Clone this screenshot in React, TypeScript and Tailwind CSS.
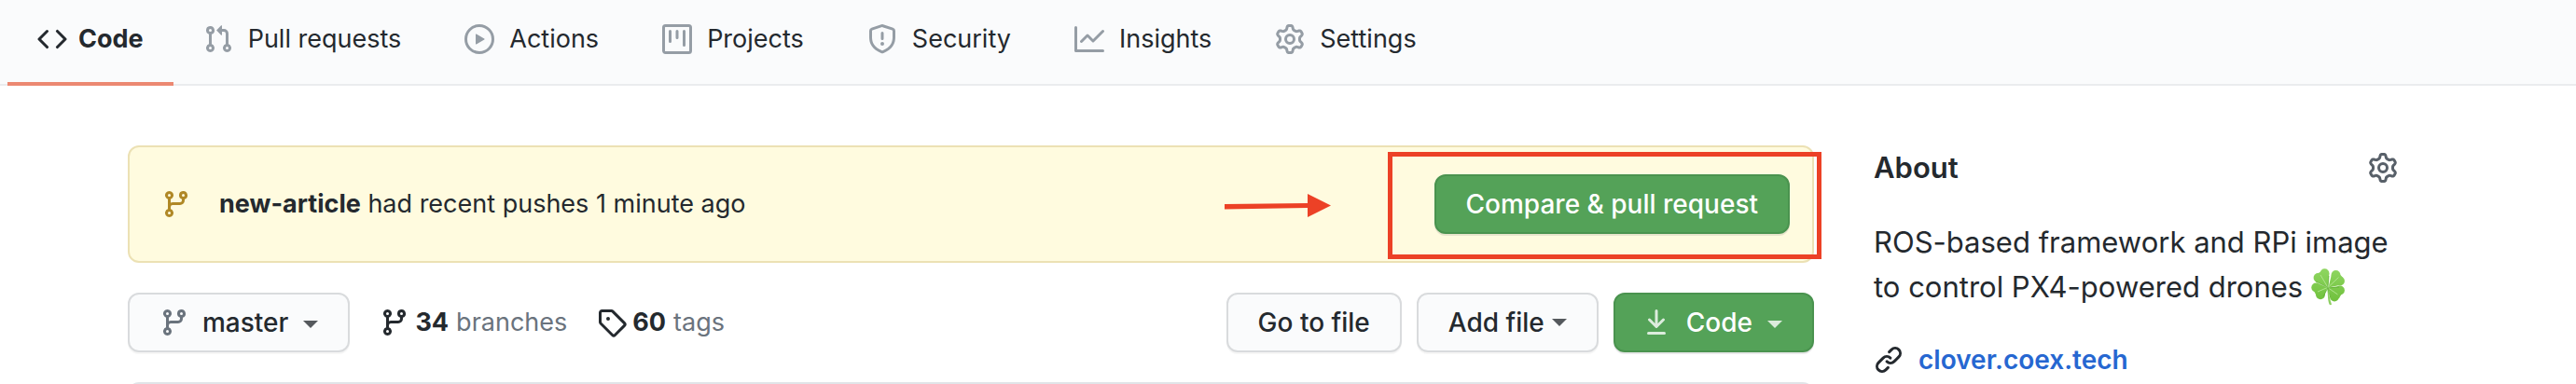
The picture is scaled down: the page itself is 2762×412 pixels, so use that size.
import type { ReactNode } from "react";

const paths = {
  code: "M4.72 3.22a.75.75 0 011.06 1.06L2.06 8l3.72 3.72a.75.75 0 11-1.06 1.06L.47 8.53a.75.75 0 010-1.06l4.25-4.25zm6.56 0a.75.75 0 10-1.06 1.06L13.94 8l-3.72 3.72a.75.75 0 101.06 1.06l4.25-4.25a.75.75 0 000-1.06l-4.25-4.25z",
  pull: "M7.177 3.073L9.573.677A.25.25 0 0110 .854v4.792a.25.25 0 01-.427.177L7.177 3.427a.25.25 0 010-.354zM3.75 2.5a.75.75 0 100 1.5.75.75 0 000-1.5zm-2.25.75a2.25 2.25 0 113 2.122v5.256a2.251 2.251 0 11-1.5 0V5.372A2.25 2.25 0 011.5 3.25zM11 2.5h-1V4h1a1 1 0 011 1v5.628a2.251 2.251 0 101.5 0V5A2.5 2.5 0 0011 2.5zm1 10.25a.75.75 0 111.5 0 .75.75 0 01-1.5 0zM3.75 12a.75.75 0 100 1.5.75.75 0 000-1.5z",
  play: "M1.5 8a6.5 6.5 0 1113 0 6.5 6.5 0 01-13 0zM8 0a8 8 0 100 16A8 8 0 008 0zM6.379 5.227A.25.25 0 006 5.442v5.117a.25.25 0 00.379.214l4.264-2.559a.25.25 0 000-.428L6.379 5.227z",
  project: "M1.75 0A1.75 1.75 0 000 1.75v12.5C0 15.216.784 16 1.75 16h12.5A1.75 1.75 0 0016 14.25V1.75A1.75 1.75 0 0014.25 0H1.75zM1.5 1.75a.25.25 0 01.25-.25h12.5a.25.25 0 01.25.25v12.5a.25.25 0 01-.25.25H1.75a.25.25 0 01-.25-.25V1.75zM11.75 3a.75.75 0 00-.75.75v7.5a.75.75 0 001.5 0v-7.5a.75.75 0 00-.75-.75zm-8.25.75a.75.75 0 011.5 0v5.5a.75.75 0 01-1.5 0v-5.5zM8 3a.75.75 0 00-.75.75v3.5a.75.75 0 001.5 0v-3.5A.75.75 0 008 3z",
  shield: "M7.467.133a1.75 1.75 0 011.066 0l5.25 1.68A1.75 1.75 0 0115 3.48V7c0 1.566-.32 3.182-1.303 4.682-.983 1.498-2.585 2.813-5.032 3.855a1.7 1.7 0 01-1.33 0c-2.447-1.042-4.049-2.357-5.032-3.855C1.32 10.182 1 8.566 1 7V3.48a1.75 1.75 0 011.217-1.667l5.25-1.68zm.61 1.429a.25.25 0 00-.153 0l-5.25 1.68a.25.25 0 00-.174.238V7c0 1.358.275 2.666 1.057 3.86.784 1.194 2.121 2.34 4.366 3.297a.2.2 0 00.154 0c2.245-.956 3.582-2.104 4.366-3.298C13.225 9.666 13.5 8.36 13.5 7V3.48a.25.25 0 00-.174-.237l-5.25-1.68zM9 10.5a1 1 0 11-2 0 1 1 0 012 0zm-.25-5.75a.75.75 0 10-1.5 0v3a.75.75 0 001.5 0v-3z",
  graph: "M1.5 1.75a.75.75 0 00-1.5 0v12.5c0 .414.336.75.75.75h14.5a.75.75 0 000-1.5H1.5V1.75zm14.28 2.53a.75.75 0 00-1.06-1.06L10 7.94 7.53 5.47a.75.75 0 00-1.06 0L3.22 8.72a.75.75 0 001.06 1.06L7 7.06l2.47 2.47a.75.75 0 001.06 0l5.25-5.25z",
  gear: "M7.429 1.525a6.593 6.593 0 011.142 0c.036.003.108.036.137.146l.289 1.105c.147.56.55.967.997 1.189.174.086.341.183.501.29.417.278.97.423 1.53.27l1.102-.303c.11-.03.175.016.195.046.219.31.41.641.573.989.014.031.022.11-.059.19l-.815.806c-.411.406-.562.957-.53 1.456a4.588 4.588 0 010 .582c-.032.499.119 1.05.53 1.456l.815.806c.08.08.073.159.059.19a6.494 6.494 0 01-.573.99c-.02.029-.086.074-.195.045l-1.103-.303c-.559-.153-1.112-.008-1.529.27-.16.107-.327.204-.5.29-.449.222-.851.628-.998 1.189l-.289 1.105c-.029.11-.101.143-.137.146a6.613 6.613 0 01-1.142 0c-.036-.003-.108-.037-.137-.146l-.289-1.105c-.147-.56-.55-.967-.997-1.189a4.502 4.502 0 01-.501-.29c-.417-.278-.97-.423-1.53-.27l-1.102.303c-.11.03-.175-.016-.195-.046a6.492 6.492 0 01-.573-.989c-.014-.031-.022-.11.059-.19l.815-.806c.411-.406.562-.957.53-1.456a4.587 4.587 0 010-.582c.032-.499-.119-1.05-.53-1.456l-.815-.806c-.08-.08-.073-.159-.059-.19a6.44 6.44 0 01.573-.99c.02-.029.086-.075.195-.045l1.103.303c.559.153 1.112.008 1.529-.27.16-.107.327-.204.5-.29.449-.222.851-.628.998-1.189l.289-1.105c.029-.11.101-.143.137-.146zM8 0c-.236 0-.47.01-.701.03-.743.065-1.29.615-1.458 1.261l-.29 1.106c-.017.066-.078.158-.211.224a5.994 5.994 0 00-.668.386c-.123.082-.233.09-.3.071L3.27 2.776c-.644-.177-1.392.02-1.82.63a7.977 7.977 0 00-.704 1.217c-.315.675-.111 1.422.363 1.891l.815.806c.05.048.098.147.088.294a6.084 6.084 0 000 .772c.01.147-.038.246-.088.294l-.815.806c-.474.469-.678 1.216-.363 1.891.2.428.436.835.704 1.218.428.609 1.176.806 1.82.63l1.103-.303c.066-.019.176-.011.299.071.213.143.436.272.668.386.133.066.194.158.212.224l.289 1.106c.169.646.715 1.196 1.458 1.26a8.094 8.094 0 001.402 0c.743-.064 1.29-.614 1.458-1.26l.29-1.106c.017-.066.078-.158.211-.224a5.98 5.98 0 00.668-.386c.123-.082.233-.09.3-.071l1.102.302c.644.177 1.392-.02 1.82-.63.268-.382.505-.789.704-1.217.315-.675.111-1.422-.364-1.891l-.814-.806c-.05-.048-.098-.147-.088-.294a6.1 6.1 0 000-.772c-.01-.147.039-.246.088-.294l.814-.806c.475-.469.679-1.216.364-1.891a7.992 7.992 0 00-.704-1.218c-.428-.609-1.176-.806-1.82-.63l-1.103.303c-.066.019-.176.011-.299-.071a5.991 5.991 0 00-.668-.386c-.133-.066-.194-.158-.212-.224L10.16 1.29C9.99.645 9.444.095 8.701.031A8.094 8.094 0 008 0zm1.5 8a1.5 1.5 0 11-3 0 1.5 1.5 0 013 0zM11 8a3 3 0 11-6 0 3 3 0 016 0z",
  branch: "M11.75 2.5a.75.75 0 100 1.5.75.75 0 000-1.5zm-2.25.75a2.25 2.25 0 113 2.122V6A2.5 2.5 0 0110 8.5H6a1 1 0 00-1 1v1.128a2.251 2.251 0 11-1.5 0V5.372a2.25 2.25 0 111.5 0v1.836A2.492 2.492 0 016 7h4a1 1 0 001-1v-.628A2.25 2.25 0 019.5 3.25zM4.25 12a.75.75 0 100 1.5.75.75 0 000-1.5zM3.5 3.25a.75.75 0 111.5 0 .75.75 0 01-1.5 0z",
  tag: "M2.5 7.775V2.75a.25.25 0 01.25-.25h5.025a.25.25 0 01.177.073l6.25 6.25a.25.25 0 010 .354l-5.025 5.025a.25.25 0 01-.354 0l-6.25-6.25a.25.25 0 01-.073-.177zm-1.5 0V2.75C1 1.784 1.784 1 2.75 1h5.025c.464 0 .91.184 1.238.513l6.25 6.25a1.75 1.75 0 010 2.474l-5.026 5.026a1.75 1.75 0 01-2.474 0l-6.25-6.25A1.75 1.75 0 011 7.775zM6 5a1 1 0 100 2 1 1 0 000-2z",
  download: "M7.47 10.78a.75.75 0 001.06 0l3.75-3.75a.75.75 0 00-1.06-1.06L8.75 8.44V1.75a.75.75 0 00-1.5 0v6.69L4.78 5.97a.75.75 0 00-1.06 1.06l3.75 3.75zM3.75 13a.75.75 0 000 1.5h8.5a.75.75 0 000-1.5h-8.5z",
  link: "M7.775 3.275a.75.75 0 001.06 1.06l1.25-1.25a2 2 0 112.83 2.83l-2.5 2.5a2 2 0 01-2.83 0 .75.75 0 00-1.06 1.06 3.5 3.5 0 004.95 0l2.5-2.5a3.5 3.5 0 00-4.95-4.95l-1.25 1.25zm-4.69 9.64a2 2 0 010-2.83l2.5-2.5a2 2 0 012.83 0 .75.75 0 001.06-1.06 3.5 3.5 0 00-4.95 0l-2.5 2.5a3.5 3.5 0 004.95 4.95l1.25-1.25a.75.75 0 00-1.06-1.06l-1.25 1.25a2 2 0 01-2.83 0z",
};

function Icon({ name, className = "" }: { name: keyof typeof paths; className?: string }) {
  return (
    <svg viewBox="0 0 16 16" fill="currentColor" fillRule="evenodd" aria-hidden="true" className={`size-8 shrink-0 ${className}`}>
      <path d={paths[name]} />
    </svg>
  );
}

function Caret({ className = "" }: { className?: string }) {
  return (
    <svg viewBox="0 0 16 8" fill="currentColor" aria-hidden="true" className={`h-2 w-4 shrink-0 ${className}`}>
      <path d="M0 0h16L8 8z" />
    </svg>
  );
}

const leaves = [
  { a: [14.5, 5.2], b: [7.5, 10], blade: "M18 20.500L19.300 6 14 1.500 5 6.500 5 14z" },
  { a: [26.5, 7], b: [31, 13.5], blade: "M18.500 20.500L22 6 28 3 34 10 33 17.500z" },
  { a: [5.2, 20.5], b: [10, 28.3], blade: "M17.500 20.500L6 15.500 2 22 6 30 13.500 31z" },
  { a: [31, 23.5], b: [25, 30.5], blade: "M18.500 20.500L31 19 34 25 30 32 20.500 31.500z" },
];

function Clover() {
  return (
    <svg viewBox="0 0 36 40" role="img" aria-label="four leaf clover" className="inline-block h-10 w-9 align-[-9px]">
      <defs>
        <linearGradient id="leaf" gradientUnits="userSpaceOnUse" x1="0" y1="0" x2="0" y2="36">
          <stop offset="0" stopColor="#8fd661" />
          <stop offset="1" stopColor="#6fc03c" />
        </linearGradient>
      </defs>
      <path d="M17 20.500c1.200 6 .5 13 2.500 18 .8 1 2 .8 2.500 0-2-5-3-11-3.300-18z" fill="#8dce62" />
      {leaves.map((l) => (
        <g key={l.blade} fill="url(#leaf)">
          <circle cx={l.a[0]} cy={l.a[1]} r="4.900" />
          <circle cx={l.b[0]} cy={l.b[1]} r="4.900" />
          <path d={l.blade} />
        </g>
      ))}
      <path d="M18 20.500L10 7M18.500 20L29.500 9.500M17.500 20.500L7 25M18.500 21L28.500 28" stroke="#b4e693" strokeWidth=".9" fill="none" />
      <path d="M18 20.500L5 14M18 20.500L19 8M18 21L30 20M18 21L13 30M18 21L20.500 31" stroke="#5fae33" strokeWidth=".7" fill="none" />
    </svg>
  );
}

const tabs: { icon: keyof typeof paths; label: string }[] = [
  { icon: "pull", label: "Pull requests" },
  { icon: "play", label: "Actions" },
  { icon: "project", label: "Projects" },
  { icon: "shield", label: "Security" },
  { icon: "graph", label: "Insights" },
  { icon: "gear", label: "Settings" },
];

function Button({ green = false, className = "", children }: { green?: boolean; className?: string; children: ReactNode }) {
  return (
    <button
      type="button"
      className={`flex h-16 shrink-0 items-center whitespace-nowrap rounded-xl border-2 text-[28px] font-medium ${
        green
          ? "border-[#4a934f] bg-[#54a258] text-white shadow-[0_2px_0_rgba(27,31,35,0.1)]"
          : "border-[#d9dbdd] bg-[#fafbfc] shadow-[0_2px_0_rgba(27,31,35,0.04)]"
      } ${className}`}
    >
      {children}
    </button>
  );
}

export default function App() {
  return (
    <div className="overflow-hidden bg-white font-['Inter',sans-serif] text-[27px] leading-8 text-[#24292e]">
      <nav aria-label="Repository" className="border-b-2 border-[#eaecee] bg-[#fafbfc] pl-2">
        <ul className="-mb-0.5 flex">
          <li>
            <a href="#code" aria-current="page" className="flex gap-3 border-b-4 border-[#ec8872] px-8 pt-[26px] pb-[30px] font-bold">
              <Icon name="code" />
              Code
            </a>
          </li>
          {tabs.map((t) => (
            <li key={t.label}>
              <a href={`#${t.icon}`} className="flex gap-4 whitespace-nowrap pt-[26px] pr-9 pl-8">
                <Icon name={t.icon} className="text-[#959da5]" />
                {t.label}
              </a>
            </li>
          ))}
        </ul>
      </nav>

      <div className="flex gap-16 pt-16 pr-[191px] pl-[137px]">
        <main className="min-w-0 flex-1">
          <section className="relative flex items-center rounded-xl border-2 border-[#ece1b4] bg-[#fffbdf] py-[29px] pr-6 pl-[34px]">
            <Icon name="branch" className="text-[#b08826]" />
            <p className="ml-[30px] flex-1">
              <strong className="font-bold">new-article</strong> had recent pushes 1 minute ago
            </p>
            <Button green className="px-8">Compare &amp; pull request</Button>
            <div className="absolute top-[5px] -right-2.5 h-[115px] w-[465px] border-[5px] border-[#ec4126]" />
            <svg viewBox="0 0 114 26" aria-hidden="true" className="absolute top-[50px] right-[516px] h-[26px] w-[114px]">
              <path d="M0 11l89-1V0l25 12.500L89 25V15L0 16.500z" fill="#ec4126" />
            </svg>
          </section>

          <div className="mt-8 flex items-center">
            <Button className="px-8">
              <Icon name="branch" className="text-[#6a737d]" />
              <span className="ml-3.5">master</span>
              <Caret className="mt-1 ml-4 text-[#55595d]" />
            </Button>
            <a href="#branches" className="ml-8 flex items-center">
              <Icon name="branch" />
              <strong className="ml-1.5 font-bold">34</strong>
              <span className="ml-2 text-[#6a737d]">branches</span>
            </a>
            <a href="#tags" className="ml-8 flex items-center">
              <Icon name="tag" />
              <strong className="ml-1.5 font-bold">60</strong>
              <span className="ml-2 text-[#6a737d]">tags</span>
            </a>
            <div className="ml-auto flex gap-4">
              <Button className="px-8">Go to file</Button>
              <Button className="px-8">
                Add file
                <Caret className="ml-2 text-[#55595d]" />
              </Button>
              <Button green className="px-8">
                <Icon name="download" className="-ml-1 text-[#dcecdd]" />
                <span className="ml-4">Code</span>
                <Caret className="mt-1 ml-4 text-[#dcecdd]" />
              </Button>
            </div>
          </div>

          <div className="mt-8 h-0.5 overflow-hidden">
            <div className="h-8 rounded-xl border-2 border-[#e1e4e8]" />
          </div>
        </main>

        <aside className="w-[562px] shrink-0">
          <div className="flex items-center justify-between pt-2">
            <h2 className="text-[31px] leading-8 font-semibold">About</h2>
            <button type="button" aria-label="Edit repository details" className="text-[#586069]">
              <Icon name="gear" />
            </button>
          </div>
          <p className="mt-10 text-[31px] leading-[48px]">
            ROS-based framework and RPi image to control PX4-powered drones <Clover />
          </p>
          <a href="#website" className="mt-[38px] flex items-center gap-4 text-[28px] font-semibold text-[#2667d1]">
            <Icon name="link" className="text-[#24292e]" />
            clover.coex.tech
          </a>
        </aside>
      </div>
    </div>
  );
}
